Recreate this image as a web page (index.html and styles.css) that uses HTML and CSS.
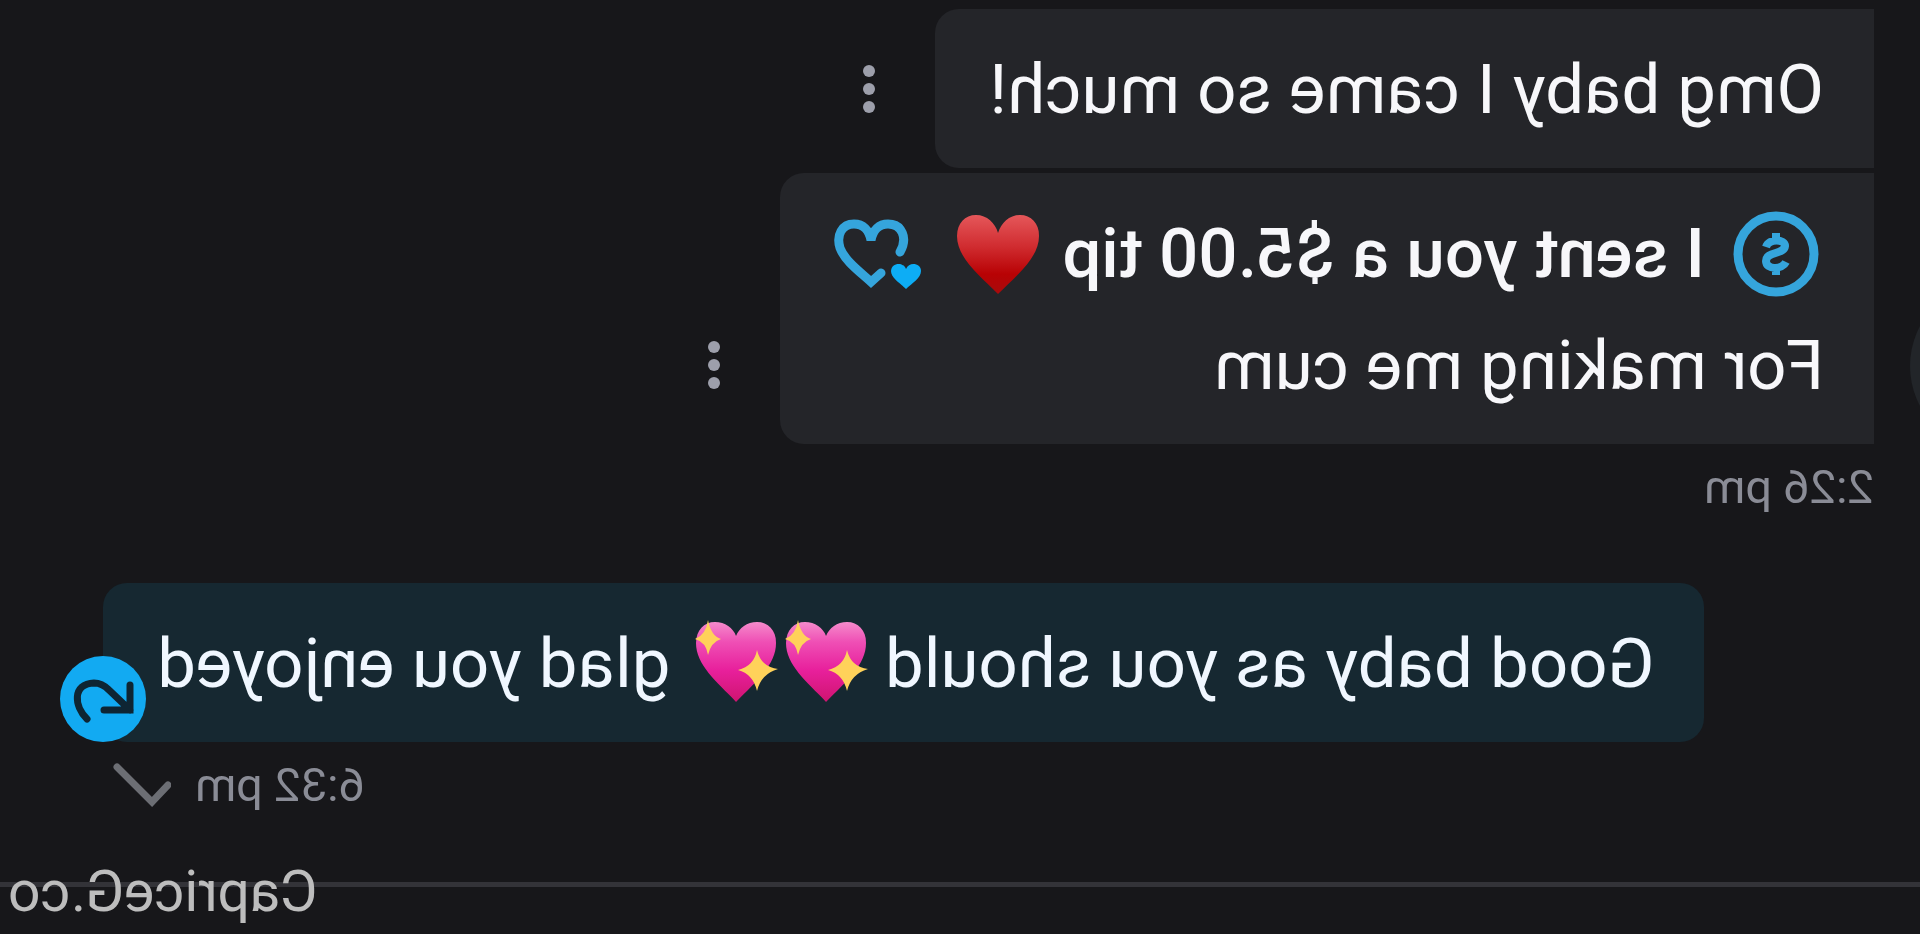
FILE: index.html
```html
<!DOCTYPE html>
<html lang="en">
<head>
    <meta charset="UTF-8">
    <meta name="viewport" content="width=device-width, initial-scale=1.0">
    <title>Messages</title>
    <link rel="stylesheet" href="styles.css">
</head>
<body>
    <!-- Shared emoji shapes -->
    <svg class="defs" width="0" height="0" aria-hidden="true">
        <defs>
            <linearGradient id="redFill" x1="0" y1="0" x2="0" y2="1">
                <stop offset="0" stop-color="#e5575a"/>
                <stop offset="0.4" stop-color="#d02c30"/>
                <stop offset="0.75" stop-color="#b80204"/>
                <stop offset="1" stop-color="#a80b0c"/>
            </linearGradient>
            <linearGradient id="pinkFill" x1="0" y1="0" x2="0" y2="1">
                <stop offset="0" stop-color="#f58bcb"/>
                <stop offset="0.25" stop-color="#ef4fb5"/>
                <stop offset="0.6" stop-color="#e8209c"/>
                <stop offset="1" stop-color="#cf1470"/>
            </linearGradient>
            <symbol id="sparkHeart" viewBox="0 0 84 84">
                <path fill="url(#pinkFill)" d="M42 83C22 62 2 46 2 24C2 11 10 3 21 3C31 3 39 9 42 17C45 9 53 3 63 3C74 3 82 11 82 24C82 46 62 62 42 83Z"/>
                <path fill="#ffd25a" d="M70 1Q72 16 83 20Q72 23 70 36Q67 23 57 20Q67 17 70 1Z"/>
                <path fill="#ffd25a" d="M21 31Q24 47 40 51Q25 55 21 72Q17 55 0 50Q17 48 21 31Z"/>
            </symbol>
        </defs>
    </svg>

    <main class="chat">
        <section class="group incoming">
            <span class="avatar"></span>
            <div class="row">
                <p class="bubble">Omg baby I came so much!</p>
                <button type="button" class="menu" aria-label="Message options"><i></i><i></i><i></i></button>
            </div>
            <div class="row">
                <div class="bubble">
                    <p class="tip">
                        <svg class="coin" viewBox="0 0 86 86" aria-hidden="true">
                            <circle cx="43" cy="43" r="38" fill="none" stroke="#35a5dc" stroke-width="9"/>
                            <path d="M53 36C50 27 34 28 34 35C35 44 53 40 53 50C53 59 37 59 33 51M43 22V29M43 57V64" fill="none" stroke="#35a5dc" stroke-width="8"/>
                        </svg>
                        <strong>I sent you a $5.00 tip</strong>
                        <svg class="heart" viewBox="0 0 84 80" role="img" aria-label="Red heart">
                            <path fill="url(#redFill)" d="M42 80C24 62 1 44 1 22C1 9 9 1 20 1C31 1 39 9 42 19C45 9 53 1 64 1C75 1 83 9 83 22C83 44 60 62 42 80Z"/>
                        </svg>
                        <svg class="hearts" viewBox="0 0 88 72" aria-hidden="true">
                            <path d="M22 34C14 20 20 6 34 6C43 6 49 12 51 22C53 12 59 6 68 6C80 6 86 17 82 30C77 43 63 53 51 64L41 55" fill="none" stroke="#35a5dc" stroke-width="9" stroke-linecap="round"/>
                            <path d="M16 71C10 65 1 60 1 53C1 45 13 43 16 51C19 43 31 45 31 53C31 60 22 65 16 71Z" fill="#0dadf5"/>
                        </svg>
                    </p>
                    <p>For making me cum</p>
                </div>
                <button type="button" class="menu" aria-label="Message options"><i></i><i></i><i></i></button>
            </div>
            <div class="meta"><time>2:26 pm</time></div>
        </section>

        <section class="group outgoing">
            <div class="bubble sent">
                <p>Good baby as you should <svg class="spark" role="img" aria-label="Sparkling heart"><use href="#sparkHeart"/></svg><svg class="spark" role="img" aria-label="Sparkling heart"><use href="#sparkHeart"/></svg> glad you enjoyed</p>
                <button type="button" class="resend" aria-label="Undo">
                    <svg viewBox="0 0 86 86" aria-hidden="true">
                        <path d="M59 63C72 50 74 28 52 27C44 27 40 31 37 34L16 54M16 29V54H42" fill="none" stroke="#0e2533" stroke-width="7" stroke-linecap="round"/>
                    </svg>
                </button>
            </div>
            <div class="meta">
                <time>6:32 pm</time>
                <svg class="check" viewBox="0 0 58 44" aria-label="Sent">
                    <path d="M3 22L19 39L54 4" fill="none" stroke="#6c6e74" stroke-width="7" stroke-linecap="round"/>
                </svg>
            </div>
        </section>

        <footer class="footer">
            <span class="watermark">CapriceG.co</span>
        </footer>
    </main>
</body>
</html>
```
FILE: styles.css
```css
* {
    box-sizing: border-box;
}

body {
    margin: 0;
    background-color: #17171a;
    color: #f7f7fa;
    font-family: Roboto, "Liberation Sans", sans-serif;
    font-size: 69px;
    line-height: 112px;
}

p {
    margin: 0;
}

.defs {
    position: absolute;
}

/* The conversation is shown flipped left to right */
.chat {
    min-height: 100vh;
    padding-top: 9px;
    display: flex;
    flex-direction: column;
    overflow: hidden;
    transform: scaleX(-1);
}

.group {
    display: flex;
    flex-direction: column;
    gap: 5px;
    position: relative;
}

.incoming {
    align-items: flex-start;
    padding-left: 46px;
}

.outgoing {
    align-items: flex-end;
    margin-top: 66px;
    padding-right: 103px;
}

.row {
    display: flex;
    align-items: flex-end;
    gap: 60px;
}

.bubble {
    padding: 25px 54px 22px 50px;
    background-color: #242529;
    border-radius: 0 24px 24px 0;
    white-space: nowrap;
}

.sent {
    position: relative;
    background-color: #162831;
    border-radius: 24px;
    color: #f0f7ff;
}

.menu {
    height: 159px;
    padding: 0;
    border: none;
    background: none;
    display: flex;
    flex-direction: column;
    justify-content: center;
    gap: 6px;
    cursor: pointer;
}

.menu i {
    width: 12px;
    height: 12px;
    border-radius: 50%;
    background-color: #9d9fab;
}

.tip {
    display: flex;
    align-items: center;
    padding-left: 5px;
}

.tip strong {
    font-weight: 500;
    margin: 0 22px 0 28px;
}

.coin {
    width: 86px;
    height: 86px;
}

.heart {
    width: 84px;
    height: 80px;
}

.hearts {
    width: 88px;
    height: 72px;
    margin-left: 34px;
}

.spark {
    width: 84px;
    height: 84px;
    margin-right: 6px;
    vertical-align: -16px;
}

.resend {
    position: absolute;
    right: -43px;
    bottom: 0;
    width: 86px;
    height: 86px;
    padding: 0;
    border: none;
    border-radius: 50%;
    background-color: #12aaf2;
    cursor: pointer;
}

.resend svg {
    display: block;
}

.meta {
    display: flex;
    align-items: center;
    gap: 24px;
    padding-top: 8px;
    color: #8a8c96;
    font-size: 47px;
    line-height: 60px;
}

.check {
    width: 58px;
    height: 44px;
    margin-right: 10px;
}

.avatar {
    position: absolute;
    left: -160px;
    top: 272px;
    width: 170px;
    height: 170px;
    border-radius: 50%;
    background-color: #222529;
}

.footer {
    position: relative;
    margin-top: 67px;
    border-top: 5px solid #333338;
}

.watermark {
    position: absolute;
    right: 8px;
    top: -27px;
    color: #bdbdbd;
    font-size: 57px;
    line-height: 64px;
}
```
